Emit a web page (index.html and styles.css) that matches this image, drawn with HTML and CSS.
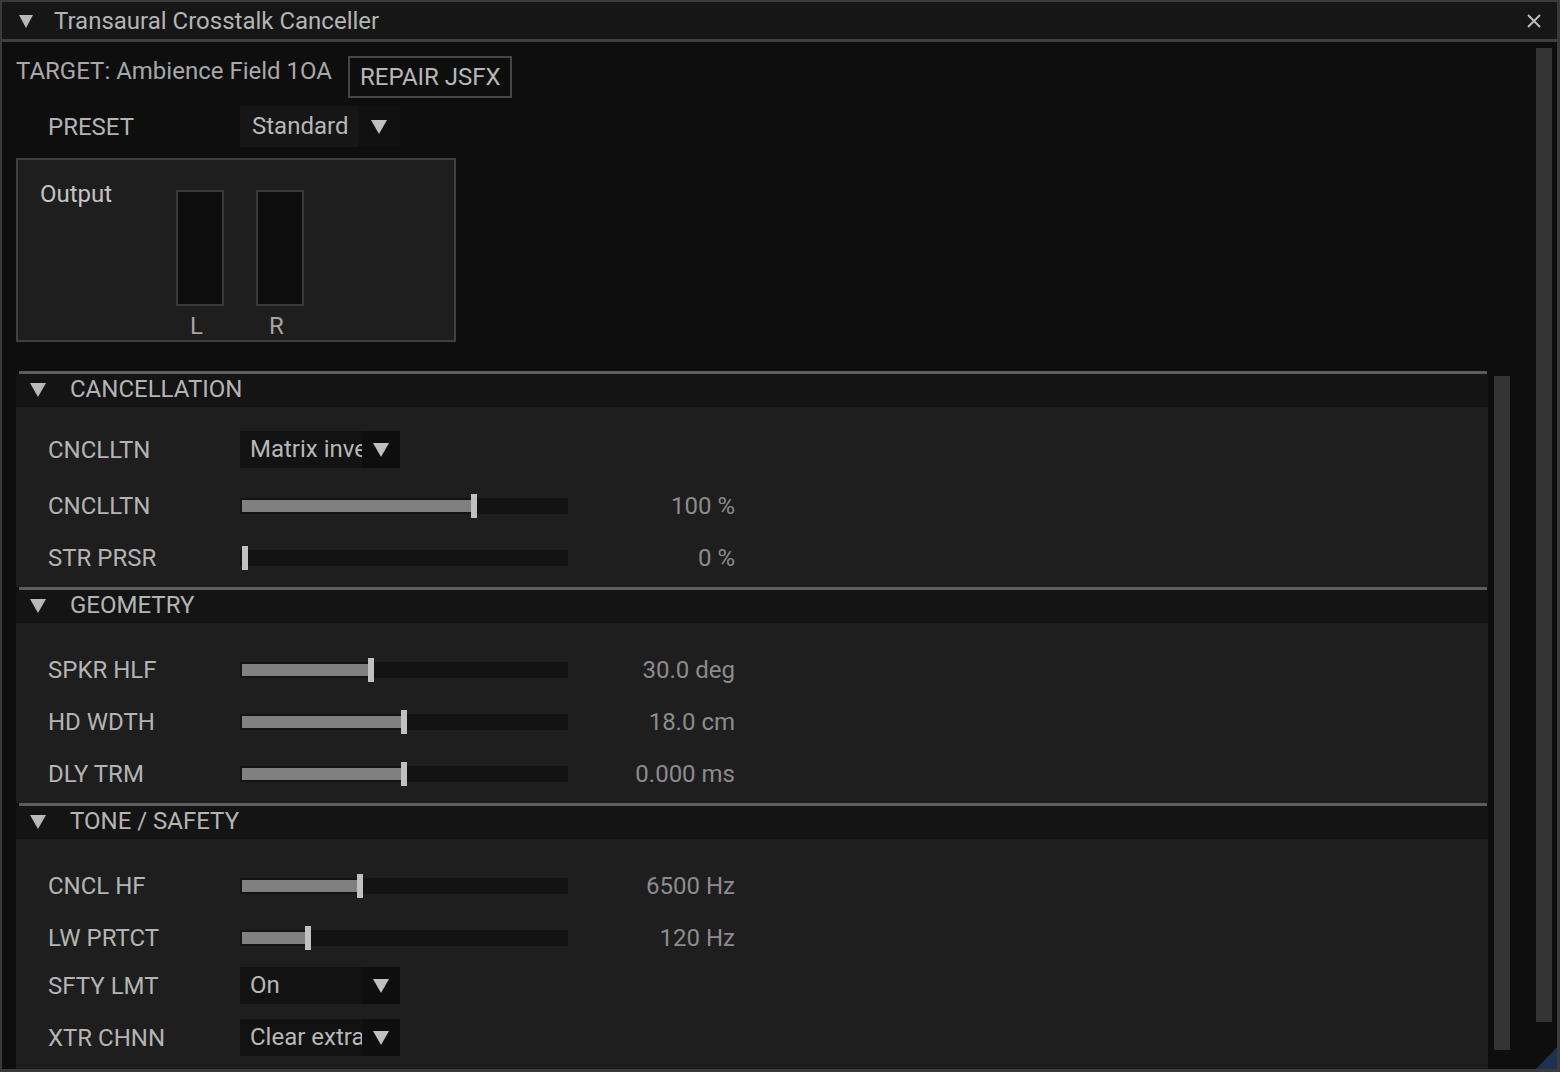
FILE: index.html
```html
<!DOCTYPE html>
<html>
<head>
<meta charset="utf-8">
<title>Transaural Crosstalk Canceller</title>
<link rel="stylesheet" href="styles.css">
</head>
<body>
<div class="window">
  <div class="titlebar">
    <svg class="tri-title" width="14" height="13" viewBox="0 0 14 13"><polygon points="0,0 14,0 7,13"/></svg>
    <span class="title">Transaural Crosstalk Canceller</span>
    <svg class="close" width="14" height="14" viewBox="0 0 14 14"><path d="M1 1 L13 13 M13 1 L1 13"/></svg>
  </div>
  <div class="client">
    <div class="main">
      <div class="target-row">
        <span class="target">TARGET: Ambience Field 1OA</span>
        <div class="btn">REPAIR JSFX</div>
      </div>
      <div class="preset-row">
        <span class="label">PRESET</span>
        <div class="combo combo-top">
          <span class="combo-text">Standard</span>
          <span class="combo-arrow"><svg width="16" height="14" viewBox="0 0 16 14"><polygon points="0,0 16,0 8,14"/></svg></span>
        </div>
      </div>
      <div class="out-box">
        <span class="out-label">Output</span>
        <div class="meters">
          <div class="meter"></div>
          <div class="meter"></div>
          <span class="meter-label">L</span>
          <span class="meter-label">R</span>
        </div>
      </div>
      <div class="child">
        <div class="sections">
          <div class="sec">
            <div class="sec-line"></div>
            <div class="sec-head">
              <svg class="tri-sec" width="16" height="14" viewBox="0 0 16 14"><polygon points="0,0 16,0 8,14"/></svg>
              <span class="sec-title">CANCELLATION</span>
            </div>
            <div class="sec-body">
              <div class="row combo-row">
                <span class="label">CNCLLTN</span>
                <div class="combo">
                  <span class="combo-text">Matrix inversion</span>
                  <span class="combo-arrow"><svg width="16" height="14" viewBox="0 0 16 14"><polygon points="0,0 16,0 8,14"/></svg></span>
                </div>
              </div>
              <div class="row">
                <span class="label">CNCLLTN</span>
                <div class="track"><div class="fill" style="width:229px"></div><div class="knob"></div></div>
                <span class="value">100 %</span>
              </div>
              <div class="row">
                <span class="label">STR PRSR</span>
                <div class="track"><div class="fill" style="width:0px"></div><div class="knob"></div></div>
                <span class="value">0 %</span>
              </div>
            </div>
          </div>
          <div class="sec">
            <div class="sec-line"></div>
            <div class="sec-head">
              <svg class="tri-sec" width="16" height="14" viewBox="0 0 16 14"><polygon points="0,0 16,0 8,14"/></svg>
              <span class="sec-title">GEOMETRY</span>
            </div>
            <div class="sec-body">
              <div class="row">
                <span class="label">SPKR HLF</span>
                <div class="track"><div class="fill" style="width:126px"></div><div class="knob"></div></div>
                <span class="value">30.0 deg</span>
              </div>
              <div class="row">
                <span class="label">HD WDTH</span>
                <div class="track"><div class="fill" style="width:159px"></div><div class="knob"></div></div>
                <span class="value">18.0 cm</span>
              </div>
              <div class="row">
                <span class="label">DLY TRM</span>
                <div class="track"><div class="fill" style="width:159px"></div><div class="knob"></div></div>
                <span class="value">0.000 ms</span>
              </div>
            </div>
          </div>
          <div class="sec last">
            <div class="sec-line"></div>
            <div class="sec-head">
              <svg class="tri-sec" width="16" height="14" viewBox="0 0 16 14"><polygon points="0,0 16,0 8,14"/></svg>
              <span class="sec-title">TONE / SAFETY</span>
            </div>
            <div class="sec-body">
              <div class="row">
                <span class="label">CNCL HF</span>
                <div class="track"><div class="fill" style="width:115px"></div><div class="knob"></div></div>
                <span class="value">6500 Hz</span>
              </div>
              <div class="row">
                <span class="label">LW PRTCT</span>
                <div class="track"><div class="fill" style="width:63px"></div><div class="knob"></div></div>
                <span class="value">120 Hz</span>
              </div>
              <div class="row combo-row">
                <span class="label">SFTY LMT</span>
                <div class="combo">
                  <span class="combo-text">On</span>
                  <span class="combo-arrow"><svg width="16" height="14" viewBox="0 0 16 14"><polygon points="0,0 16,0 8,14"/></svg></span>
                </div>
              </div>
              <div class="row combo-row">
                <span class="label">XTR CHNN</span>
                <div class="combo">
                  <span class="combo-text">Clear extra channels</span>
                  <span class="combo-arrow"><svg width="16" height="14" viewBox="0 0 16 14"><polygon points="0,0 16,0 8,14"/></svg></span>
                </div>
              </div>
            </div>
          </div>
        </div>
        <div class="scroll scroll-inner"></div>
      </div>
    </div>
    <div class="scroll scroll-outer"></div>
  </div>
  <div class="grip"></div>
</div>
</body>
</html>
```

FILE: styles.css
```css
* { box-sizing: border-box; }

html, body {
  margin: 0;
  padding: 0;
  background: #0e0e0e;
}

body {
  font-family: Roboto, "Liberation Sans", sans-serif;
  font-size: 24px;
  line-height: 28px;
  color: #b4b4b4;
}

.window {
  position: relative;
  width: 1560px;
  height: 1072px;
  border-style: solid;
  border-color: #3a3a3a;
  border-width: 2px 3px 3px 2px;
  background: #0e0e0e;
  display: flex;
  flex-direction: column;
  overflow: hidden;
}

.titlebar {
  flex: none;
  height: 40px;
  background: #161616;
  border-bottom: 3px solid #3f3f3f;
  display: flex;
  align-items: center;
  padding: 1px 16px 0 17px;
}

.tri-title {
  fill: #b8b8b8;
  flex: none;
}

.title {
  margin-left: 21px;
  flex: 1;
  color: #b4b4b4;
}

.close {
  stroke: #bdbdbd;
  stroke-width: 2;
  fill: none;
  flex: none;
}

.client {
  flex: 1;
  min-height: 0;
  display: flex;
  padding: 0 5px 0 14px;
}

.main {
  flex: 1;
  min-width: 0;
  display: flex;
  flex-direction: column;
}

.target-row {
  margin-top: 14px;
  height: 42px;
  display: flex;
  align-items: flex-start;
  flex: none;
}

.target {
  margin-top: 1px;
  color: #a8a8a8;
}

.btn {
  margin-left: 16px;
  width: 164px;
  height: 42px;
  border: 2px solid #454545;
  padding-left: 10px;
  line-height: 38px;
  color: #b8b8b8;
  background: #0e0e0e;
}

.preset-row {
  margin-top: 8px;
  display: flex;
  align-items: center;
  padding-left: 32px;
  flex: none;
}

.label {
  width: 192px;
  flex: none;
  color: #b4b4b4;
}

.combo {
  width: 160px;
  height: 37px;
  display: flex;
  flex: none;
}

.combo-text {
  flex: 1;
  min-width: 0;
  overflow: hidden;
  white-space: nowrap;
  padding-left: 10px;
  line-height: 37px;
  background: #121212;
  color: #b8b8b8;
}

.combo-arrow {
  width: 38px;
  flex: none;
  background: #0e0e0e;
  display: flex;
  align-items: center;
  justify-content: center;
}

.combo-arrow svg {
  fill: #c0c0c0;
}

.combo-top {
  height: 41px;
}

.combo-top .combo-text {
  background: #161616;
  line-height: 41px;
  padding-left: 12px;
}

.combo-top .combo-arrow {
  width: 42px;
  background: #111111;
}

.out-box {
  margin-top: 11px;
  width: 440px;
  height: 184px;
  flex: none;
  border: 2px solid #404040;
  background: #1e1e1e;
  display: flex;
  align-items: flex-start;
  padding: 20px 22px 0 22px;
}

.out-label {
  width: 136px;
  flex: none;
  color: #c4c4c4;
}

.meters {
  margin-top: 10px;
  display: grid;
  grid-template-columns: 48px 48px;
  column-gap: 32px;
}

.meter {
  height: 116px;
  border: 2px solid #3a3a3a;
  background: #0e0e0e;
}

.meter-label {
  margin-top: 6px;
  padding-right: 7px;
  text-align: center;
  color: #a4a4a4;
}

.child {
  margin-top: 29px;
  flex: 1;
  min-height: 0;
  display: flex;
  overflow: hidden;
}

.sections {
  width: 1472px;
  flex: none;
  display: flex;
  flex-direction: column;
  overflow: hidden;
}

.sec {
  flex: none;
  display: flex;
  flex-direction: column;
}

.sec.last {
  flex: 1;
}

.sec-line {
  height: 3px;
  margin: 0 1px 0 3px;
  background: #5c5c5c;
  flex: none;
}

.sec-head {
  height: 33px;
  flex: none;
  background: #141414;
  display: flex;
  align-items: center;
  padding-left: 14px;
  padding-bottom: 3px;
}

.tri-sec {
  fill: #b8b8b8;
  flex: none;
  margin-top: 1px;
}

.sec-title {
  margin-left: 24px;
  color: #b4b4b4;
}

.sec-body {
  background: #1e1e1e;
  padding: 24px 0 0 32px;
  flex: 1;
}

.row {
  display: flex;
  align-items: center;
  height: 46px;
  margin-bottom: 6px;
}

.row.combo-row {
  height: 37px;
  margin-bottom: 15px;
}

.track {
  width: 328px;
  height: 16px;
  flex: none;
  background: #131313;
  padding: 2px;
  display: flex;
  align-items: center;
}

.fill {
  height: 12px;
  background: #808080;
  flex: none;
}

.knob {
  width: 6px;
  height: 24px;
  background: #c0c0c0;
  flex: none;
}

.value {
  width: 167px;
  flex: none;
  text-align: right;
  color: #8c8c8c;
}

.scroll {
  background: #333333;
  width: 16px;
  flex: none;
}

.scroll-inner {
  margin-left: 6px;
  margin-top: 5px;
  height: 674px;
}

.scroll-outer {
  margin-left: 26px;
  margin-top: 6px;
  height: 974px;
}

.grip {
  position: absolute;
  right: 0;
  bottom: 0;
  width: 21px;
  height: 22px;
  background: #1f3150;
  clip-path: polygon(100% 0, 100% 100%, 0 100%);
}
```
